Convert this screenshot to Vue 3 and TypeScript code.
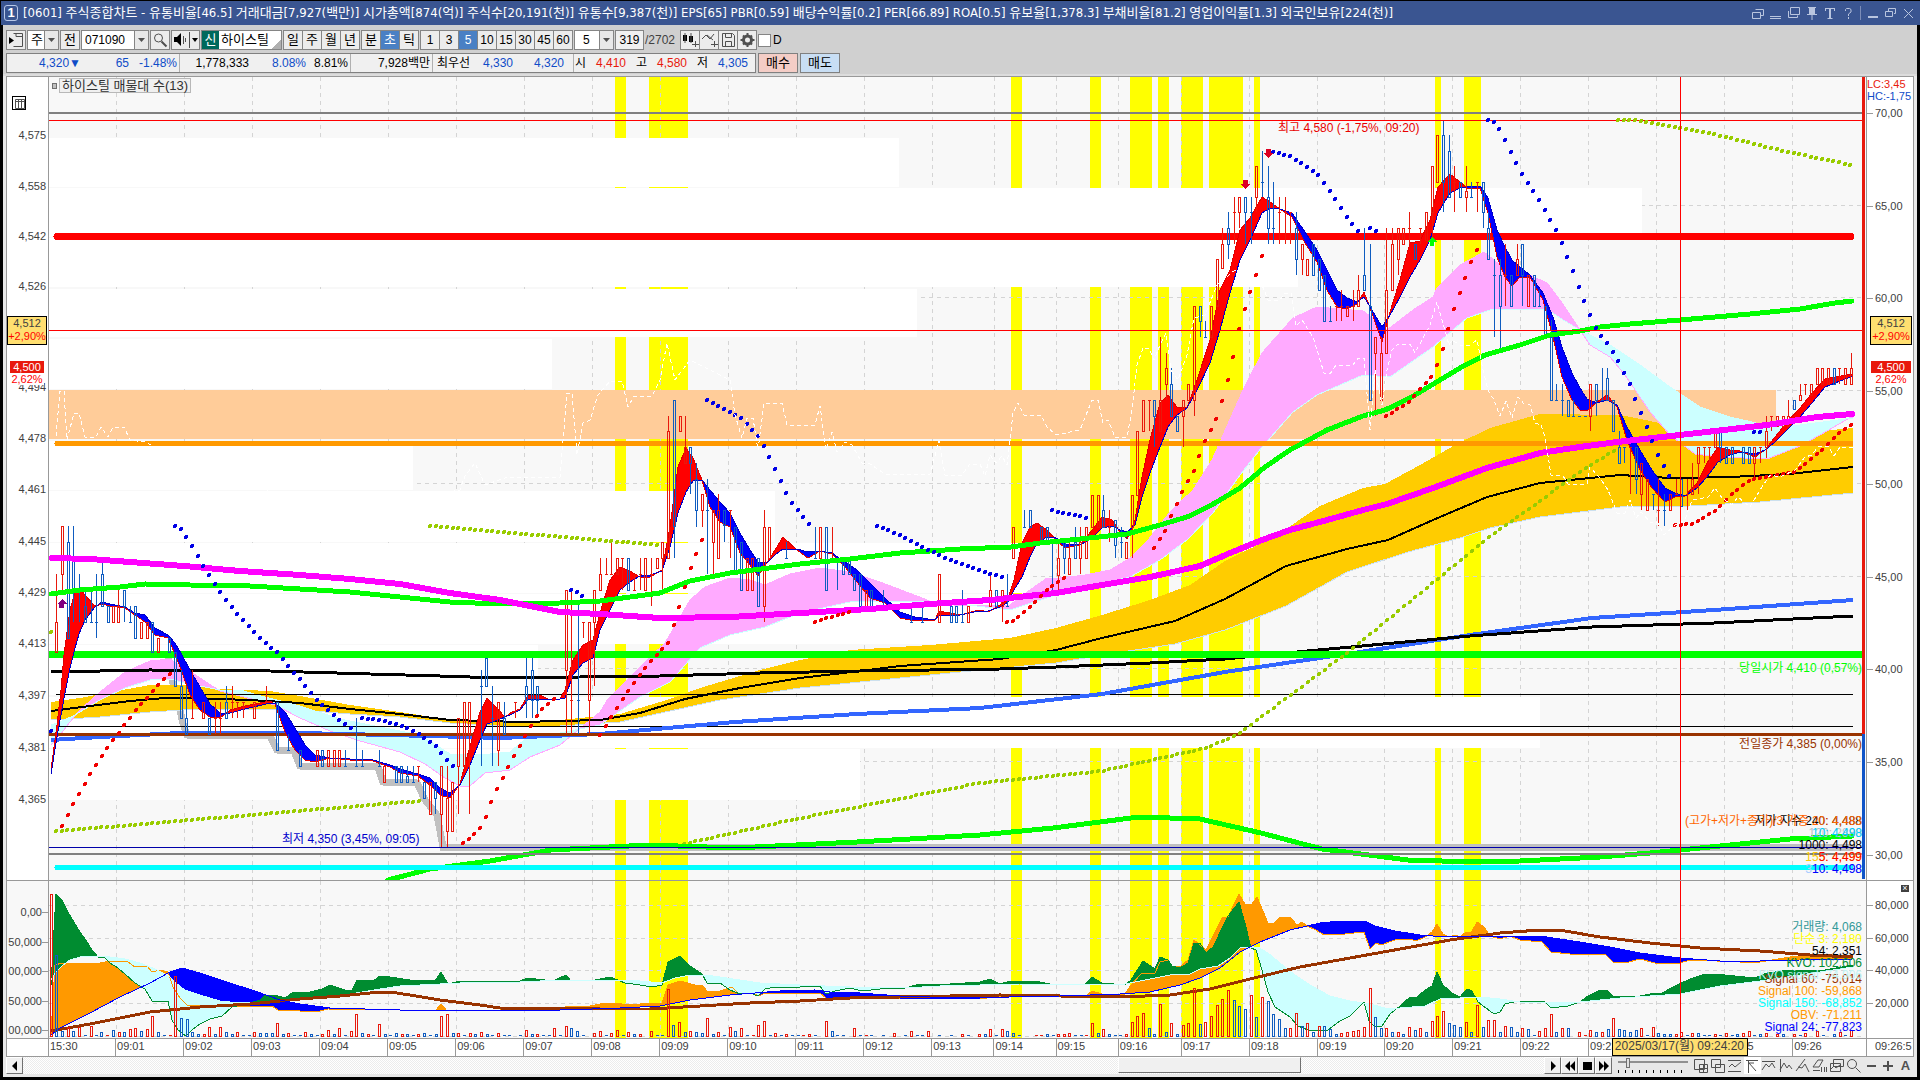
<script setup lang="ts">
type Pt = [number, number]
type Rect = { x: number; y: number; w: number; h: number }

const title =
  '[0601] 주식종합차트 - 유통비율[46.5] 거래대금[7,927(백만)] 시가총액[874(억)] 주식수[20,191(천)] 유통수[9,387(천)] EPS[65] PBR[0.59] 배당수익률[0.2] PER[66.89] ROA[0.5] 유보율[1,378.3] 부채비율[81.2] 영업이익률[1.3] 외국인보유[224(천)]'

const periods = ['일', '주', '월', '년']
const units = ['분', '초', '틱']
const counts = ['1', '3', '5', '10', '15', '30', '45', '60']

const times: [string, number][] = [
  ['15:30', 67], ['09:01', 68], ['09:02', 68], ['09:03', 68], ['09:04', 68], ['09:05', 68], ['09:06', 68],
  ['09:07', 68], ['09:08', 68], ['09:09', 68], ['09:10', 68], ['09:11', 68], ['09:12', 68], ['09:13', 62],
  ['09:14', 62], ['09:15', 62], ['09:16', 63], ['09:17', 68], ['09:18', 68], ['09:19', 67], ['09:20', 68],
  ['09:21', 68], ['09:22', 68], ['09:23', 68], ['09:24', 68], ['09:25', 68], ['09:26', 74],
]
const gridX: number[] = []
let edge = 49
for (const [, w] of times) {
  if (edge > 49) gridX.push(edge)
  edge += w
}

const pts = (s: string): Pt[] => s.trim().split(/\s+/).map(p => p.split(',').map(Number) as Pt)

/* ---------- bands ---------- */
function at(line: Pt[], x: number): number {
  if (x <= line[0][0]) return line[0][1]
  for (let i = 1; i < line.length; i++) {
    if (x <= line[i][0]) {
      const [x0, y0] = line[i - 1]
      const [x1, y1] = line[i]
      return y0 + ((y1 - y0) * (x - x0)) / (x1 - x0 || 1)
    }
  }
  return line[line.length - 1][1]
}
function band(a: Pt[], b: Pt[]): { up: string; down: string } {
  const xs = [...new Set([...a, ...b].map(p => p[0]))].sort((m, n) => m - n)
  let up = ''
  let down = ''
  const add = (x0: number, a0: number, b0: number, x1: number, a1: number, b1: number) => {
    const d = `M${x0} ${a0}L${x1} ${a1}L${x1} ${b1}L${x0} ${b0}Z`
    if (a0 + a1 < b0 + b1) up += d
    else down += d
  }
  for (let i = 1; i < xs.length; i++) {
    const x0 = xs[i - 1]
    const x1 = xs[i]
    const a0 = at(a, x0)
    const b0 = at(b, x0)
    const a1 = at(a, x1)
    const b1 = at(b, x1)
    const d0 = a0 - b0
    const d1 = a1 - b1
    if (d0 * d1 < 0) {
      const t = d0 / (d0 - d1)
      const xm = x0 + (x1 - x0) * t
      const ym = a0 + (a1 - a0) * t
      add(x0, a0, b0, xm, ym, ym)
      add(xm, ym, ym, x1, a1, b1)
    } else add(x0, a0, b0, x1, a1, b1)
  }
  return { up, down }
}
function marks(runs: string[]): Pt[] {
  const out: Pt[] = []
  for (const r of runs) {
    const line = pts(r)
    const end = line[line.length - 1][0]
    for (let x = line[0][0]; x <= end + 1; x += 5.67) out.push([Math.round(x), Math.round(at(line, x))])
  }
  return out
}

/* ---------- price pane ---------- */
const highlights: Rect[] = [
  [615, 11], [649, 39], [1011, 11], [1090, 11], [1130, 22], [1158, 11], [1181, 22], [1209, 34], [1254, 6], [1435, 6], [1464, 17],
].map(([x, w]) => ({ x, y: 77, w, h: 961 }))

const profile: [number, number, number][] = [
  [138, 49, 899], [188, 49, 1642], [238, 49, 1298], [289, 48, 917], [339, 50, 552],
  [441, 49, 413], [491, 51, 775], [543, 50, 1030], [594, 50, 1030], [645, 50, 538], [697, 51, 1540], [749, 51, 860],
]

const ribbonRows = `51,770,774 57,725,737 61,690,715 64,655,698 70,610,668 75,592,648 79,588,634 85,595,620 95,606,607 102,604,602 110,606,604 125,608,607 135,615,613 145,622,615 155,635,628 168,638,635 175,654,643 182,672,655 190,695,670 200,710,687 210,717,704 220,718,713 230,710,713 245,706,709 270,701,703 275,704,703 285,732,712 295,750,728 305,760,745 315,762,755 330,758,758 350,760,759 370,760,759 390,767,765 400,773,769 418,776,774 430,785,778 440,795,788 450,798,793 460,784,785 470,746,765 480,712,740 487,698,724 495,706,721 505,717,717 512,712,714 520,709,710 528,695,700 540,695,699 550,700,699 560,699,699 565,690,698 573,660,675 583,645,663 593,640,658 600,613,630 610,580,610 620,567,590 630,571,582 640,577,576 650,577,575 662,570,571 670,527,547 678,467,513 686,448,492 693,458,481 702,480,480 710,507,490 720,522,502 730,527,513 740,553,533 750,565,550 758,576,562 768,561,562 775,550,555 783,537,549 797,550,549 808,558,552 820,551,551 832,554,553 845,567,562 857,582,570 870,598,583 885,603,598 900,618,612 915,621,617 935,620,620 939,611,615 960,615,615 979,610,611 988,612,611 1000,605,607 1008,598,602 1014,580,590 1022,543,577 1030,527,557 1037,523,543 1047,530,537 1056,540,538 1065,548,544 1080,545,545 1092,530,538 1102,517,528 1112,520,526 1120,532,530 1127,539,532 1135,520,525 1142,477,497 1150,440,473 1160,403,447 1168,395,427 1177,407,415 1187,408,408 1197,380,390 1210,340,363 1220,290,330 1230,270,293 1240,230,260 1250,218,240 1262,197,213 1270,202,208 1280,209,209 1292,217,213 1305,243,232 1317,262,250 1327,290,270 1337,307,290 1347,309,298 1357,304,302 1364,292,297 1372,313,310 1382,342,327 1390,312,315 1400,280,297 1410,243,277 1420,241,260 1430,220,240 1438,187,213 1450,174,193 1460,182,188 1467,188,187 1480,188,186 1488,213,198 1497,257,230 1505,277,247 1512,286,260 1520,277,267 1530,277,275 1543,300,293 1553,337,317 1562,377,347 1572,400,373 1580,410,388 1587,411,399 1597,402,403 1607,395,400 1617,407,405 1627,440,427 1640,470,450 1652,488,470 1665,502,488 1675,497,493 1685,496,496 1697,483,488 1707,463,477 1718,447,462 1730,450,455 1740,451,452 1755,457,454 1765,450,450 1775,437,442 1787,422,430 1800,408,417 1812,393,403 1825,379,387 1835,377,383 1853,374,376`
  .split(' ').map(r => r.split(',').map(Number))
const fast = ribbonRows.map(r => [r[0], r[1]] as Pt)
const slow = ribbonRows.map(r => [r[0], r[2]] as Pt)
const ribbon = band(fast, slow)
const line = (p: Pt[]) => p.map(q => q.join(',')).join(' ')

const spanA = pts('51,745 60,735 70,722 80,710 100,692 125,672 150,661 170,659 185,668 200,678 220,691 275,705 300,718 330,731 360,741 400,752 425,764 445,778 460,786 470,786 485,773 510,770 530,757 560,745 600,712 608,699 640,667 665,643 690,600 705,587 730,578 750,580 765,585 790,574 820,568 850,572 880,582 930,601 960,606 1010,605 1030,590 1047,578 1060,578 1085,575 1110,570 1130,558 1148,540 1170,512 1193,490 1212,460 1243,390 1262,353 1293,318 1317,307 1363,311 1373,318 1380,328 1387,330 1413,310 1433,297 1437,288 1460,265 1484,252 1500,265 1523,272 1547,283 1560,300 1580,330 1590,345 1610,357 1625,375 1650,412 1670,435 1695,454 1720,457 1767,459 1800,446 1820,435 1853,416')
const spanB = pts('51,725 60,722 75,715 100,700 125,688 150,680 170,679 190,684 220,690 240,690 265,697 300,706 340,719 380,727 420,735 450,754 480,755 510,752 530,735 560,733 600,725 640,697 670,682 700,648 730,635 765,627 800,613 850,602 930,601 960,604 1010,610 1056,595 1100,584 1130,577 1160,560 1187,540 1213,513 1240,475 1262,447 1293,412 1317,395 1363,375 1390,377 1433,347 1467,318 1490,310 1547,309 1560,318 1580,330 1610,345 1640,365 1670,387 1700,407 1730,417 1765,425 1800,425 1853,418')
const cloud = band(spanA, spanB)

const goldTop = pts('51,702 80,698 100,694 150,685 185,685 220,689 270,691 300,696 350,705 400,712 450,720 500,722 560,720 620,714 670,699 700,688 760,670 800,660 850,650 930,645 1010,638 1056,628 1102,615 1150,600 1190,585 1225,561 1274,537 1320,506 1363,488 1385,484 1420,465 1455,445 1490,428 1540,414 1620,415 1650,421 1690,430 1720,433 1780,434 1810,432 1853,428')
const goldLow = pts('51,720 100,717 150,712 200,709 300,710 350,714 400,717 450,723 500,726 560,726 620,722 720,700 800,688 860,682 950,673 1056,663 1102,655 1175,644 1225,630 1286,606 1347,572 1408,552 1460,538 1490,528 1540,517 1580,512 1620,507 1690,506 1760,502 1853,493')
const gold = band(goldTop, goldLow)

const lines = {
  magenta: '52,558 90,559 130,562 184,566 240,571 300,575 350,579 400,584 450,593 500,600 560,612 600,614 660,618 730,617 800,613 870,609 930,604 990,600 1056,593 1102,585 1150,577 1200,566 1230,553 1262,540 1290,530 1327,520 1363,510 1387,504 1433,488 1487,468 1540,453 1580,447 1617,442 1680,435 1767,425 1817,417 1852,414',
  green: '51,594 80,590 120,587 145,584 190,585 250,586 300,589 350,592 400,597 450,602 500,604 560,603 600,601 660,593 690,581 730,573 800,564 850,559 900,553 960,549 1011,547 1040,543 1080,539 1127,534 1160,525 1190,516 1215,503 1240,488 1265,467 1290,450 1327,430 1363,416 1385,410 1410,398 1435,383 1460,368 1485,355 1520,345 1550,335 1580,331 1600,327 1630,324 1680,320 1750,314 1800,309 1835,303 1852,301',
  lowGreen: '388,880 430,869 490,861 551,850 649,845 735,848 857,842 980,835 1053,828 1139,817 1200,819 1261,833 1322,849 1408,860 1475,862 1520,861 1600,857 1650,853 1700,848 1750,843 1790,839 1852,836',
  blue: '51,740 100,737 140,735 180,733 300,733 430,736 500,738 600,734 735,722 857,714 980,708 1102,694 1225,672 1347,654 1470,635 1592,618 1714,610 1853,600',
  black: '51,672 150,670 270,671 370,674 440,676 500,678 660,676 760,673 860,671 1000,669 1056,667 1150,663 1225,659 1286,653 1470,636 1592,627 1714,623 1853,616',
  mid: '51,711 90,706 130,701 165,698 190,698 250,700 300,703 350,709 400,714 450,720 520,722 600,720 640,713 685,699 740,688 800,678 860,671 900,666 1000,659 1056,650 1102,638 1175,621 1225,599 1286,566 1347,549 1388,540 1433,520 1487,497 1540,483 1580,479 1620,475 1670,478 1730,477 1790,474 1853,467',
  steps: '168,655 172,680 178,700 183,724 187,735 270,736 277,750 294,751 300,766 378,767 383,782 417,783 425,800 437,815 443,847 1853,847',
  white: '56,436 60,391 64,391 67,440 74,413 79,413 85,437 96,437 101,427 108,437 113,427 124,427 130,440 145,442 200,470 300,500 400,500 460,490 465,476 475,463 485,485 508,477 560,477 567,393 572,393 577,455 583,423 590,420 598,395 610,381 622,381 628,407 634,396 652,396 660,380 667,343 675,380 690,360 730,380 735,415 742,438 747,418 753,418 758,450 764,403 782,403 787,425 815,425 820,406 826,450 832,432 837,452 845,442 852,445 862,463 870,464 885,474 930,474 939,441 945,475 962,475 970,464 980,464 985,476 990,455 996,463 1002,456 1007,465 1010,440 1013,413 1018,403 1024,415 1041,415 1047,427 1056,435 1080,430 1092,400 1098,400 1103,423 1108,420 1115,437 1127,437 1132,410 1137,365 1143,348 1149,348 1154,360 1160,345 1166,333 1171,370 1178,380 1187,355 1194,318 1205,315 1217,285 1235,270 1262,285 1268,300 1280,300 1285,293 1291,293 1296,326 1302,320 1313,337 1324,373 1330,374 1336,365 1353,365 1358,358 1364,358 1370,430 1375,370 1382,405 1387,370 1392,350 1398,344 1410,344 1415,353 1430,325 1437,302 1449,345 1452,340 1460,345 1470,345 1477,340 1483,370 1488,390 1494,400 1500,416 1506,401 1512,418 1518,397 1524,404 1530,405 1535,423 1541,425 1545,437 1551,475 1563,476 1568,484 1587,484 1590,467 1600,478 1608,490 1617,513 1625,513 1630,500 1636,518 1641,512 1650,522 1658,523 1664,535 1675,525 1685,520 1692,500 1708,497 1715,488 1722,498 1732,505 1738,497 1750,507 1760,490 1770,475 1780,477 1795,470 1805,457 1812,455 1818,447 1828,446 1834,456 1840,447 1853,447',
}

const blueDots = marks([
  '51,731 52,731', '175,526 181,529 192,546 204,567 220,592 240,617 262,640 277,652 290,668 305,685 316,699 328,710 340,721 351,728',
  '362,718 385,721 405,727 420,735 435,745 452,766', '571,590 577,592 583,597',
  '707,400 720,407 741,418 752,430 758,436 770,458 780,480 790,500 809,524', '877,526 900,535 922,547 950,560 975,569 1002,577',
  '1052,510 1058,512 1080,516 1087,518', '1273,152 1290,156 1301,163 1318,174 1330,191 1347,217 1358,231', '1370,228 1375,231',
  '1488,120 1494,122 1500,130 1511,153 1522,174 1539,200 1556,230 1568,258 1580,290 1596,329 1607,343 1618,360 1630,385 1642,415 1658,455 1670,477', '1754,432 1760,432',
])
const redDots = marks([
  '62,826 68,814 79,794 90,775 101,757 113,740 124,726 135,711 152,692 169,674',
  '463,843 475,834 482,825 487,814 492,800 498,787 510,764 520,745 539,712 558,695',
  '600,735 622,700 634,683 645,668 662,649 668,643 673,627 680,605 690,570 696,555 702,540',
  '815,622 837,615 850,612', '1007,622 1013,621 1018,617 1036,601 1047,590 1064,578',
  '1154,548 1166,530 1171,516 1183,491 1194,470 1205,441 1217,418 1222,401 1228,379 1234,355 1239,329 1245,308 1251,290 1256,275 1262,255',
  '1386,416 1409,402 1420,389 1432,376 1437,365 1443,348 1449,327 1454,309 1460,292 1466,276 1471,262 1477,249',
  '1675,525 1692,524 1715,511 1732,494 1750,480 1766,477 1795,472 1822,450 1840,432 1853,424',
])
const oliveDots = marks([
  '51,632 52,632', '56,831 120,826 250,815 420,801', '430,526 500,532 600,540 657,545',
  '684,844 796,819 980,783 1102,771 1206,748 1237,735 1347,653 1488,538 1580,472 1613,451', '1618,120 1635,120 1700,131 1780,150 1851,165',
])

/* colour, x, high, body top, body bottom, low */
const candles = `r56,574,622,652,652 r62,526,526,574,590 b68,526,542,638,638 b73,526,558,590,622 b79,574,590,590,622 b85,590,606,622,622 b91,590,622,622,622 b96,574,622,622,638 b102,558,574,606,606 b108,606,606,622,622 r113,606,606,622,622 r118,590,606,622,622 b124,590,590,606,622 b130,606,622,622,622 b135,606,606,638,638 r141,622,622,638,638 r147,622,622,638,638 b152,622,622,652,652 r158,638,638,652,652 b169,638,638,652,652 b175,652,652,686,686 b181,670,686,718,718 b186,686,718,734,734 r192,670,718,718,718 r203,702,702,718,718 b209,718,718,734,734 r215,702,718,718,734 r220,702,718,718,734 b226,686,702,718,718 r232,686,702,702,718 r237,702,702,702,718 r243,702,702,702,718 r254,702,702,718,718 r266,686,702,702,702 b277,702,702,750,750 b288,734,750,750,750 b300,750,750,766,766 r317,750,750,766,766 b322,750,750,766,766 r328,750,750,766,766 r334,750,750,766,766 r339,750,750,766,766 b345,750,766,766,766 b356,718,766,766,766 b362,750,766,766,766 b379,750,766,766,766 r384,766,766,782,782 b396,766,766,782,782 b401,766,766,782,782 b407,766,776,782,782 b413,766,782,782,782 r418,766,766,766,782 b424,782,782,798,798 r430,782,782,814,814 b435,782,782,798,814 r441,766,766,814,847 r447,766,798,831,847 r452,782,782,831,831 r458,718,718,766,814 r464,702,702,766,766 r469,702,702,734,814 b481,670,686,686,766 b486,658,658,686,686 b492,686,718,718,766 r498,702,702,750,766 b504,702,718,734,734 r515,702,702,702,718 b526,658,686,700,718 b532,658,670,700,718 b537,686,686,700,718 r566,590,590,670,734 r571,590,700,700,734 b578,605,700,700,734 r583,622,622,622,638 r589,622,622,700,734 r594,590,590,622,686 r600,558,574,590,590 r606,558,574,574,574 r611,542,574,574,574 r617,558,558,574,574 r622,558,558,558,590 b628,558,558,590,590 r634,574,590,590,590 r640,558,574,574,590 r645,558,558,590,590 r651,558,574,574,606 r657,558,558,568,568 r662,542,542,558,590 r668,416,431,558,558 b674,400,400,526,558 r680,416,416,431,431 r685,416,447,463,463 b690,447,447,463,494 b696,463,479,510,527 r702,494,494,510,527 b707,479,510,510,574 r713,510,510,542,574 r718,494,510,558,558 b724,510,510,525,542 r730,510,510,510,558 b735,527,527,574,574 b741,542,542,590,590 r747,558,558,590,590 r752,558,558,590,590 b758,558,558,606,606 r764,510,527,606,622 r769,527,527,558,558 b786,542,558,558,558 b815,527,558,558,558 r820,527,527,558,558 b826,527,527,590,590 r832,527,558,558,558 b837,558,558,558,590 b843,558,558,574,574 b849,558,558,574,574 b854,574,574,590,590 b860,574,574,606,606 r866,590,590,606,606 b871,590,590,606,606 b883,590,606,606,606 b911,606,622,622,622 b922,606,622,622,622 r939,574,574,622,622 b951,606,606,622,622 b956,606,606,622,622 b962,590,622,622,622 r968,606,606,622,622 r990,574,590,606,606 b996,590,590,606,606 r1002,590,590,606,622 b1007,574,606,606,606 r1013,527,527,558,558 b1024,510,527,527,527 b1030,510,510,527,527 b1041,527,527,542,542 b1047,527,527,542,542 b1052,542,590,590,590 r1058,542,558,575,590 b1064,540,542,558,574 r1069,542,558,574,574 b1075,527,542,558,558 r1080,527,542,558,574 r1086,527,527,558,558 r1092,495,495,527,527 r1098,495,495,527,527 b1103,495,510,527,527 r1109,510,527,527,542 b1115,520,520,545,558 b1121,527,542,542,558 r1126,542,542,558,558 r1132,495,495,527,558 r1137,431,431,495,495 r1143,400,400,431,431 r1149,400,400,400,431 b1154,400,400,416,447 r1160,337,400,431,431 r1166,353,368,384,400 b1171,368,384,416,416 b1177,416,416,431,431 r1183,400,400,416,447 r1188,384,384,400,400 r1194,306,306,400,416 b1200,306,306,321,337 b1205,321,337,337,337 r1211,306,306,337,337 r1217,259,259,306,306 r1222,228,244,268,268 b1228,212,228,244,259 r1234,197,212,212,244 r1239,197,197,212,228 b1245,197,197,212,244 b1251,197,212,212,244 r1256,166,166,197,212 b1262,151,182,182,197 b1268,166,197,228,244 b1273,182,228,228,244 r1279,197,212,212,244 r1285,197,212,212,244 r1290,212,212,212,244 b1296,212,228,259,275 r1302,244,244,259,275 r1307,259,259,275,275 b1313,244,244,275,275 b1319,259,259,290,290 b1324,275,275,321,321 b1330,306,321,321,321 r1336,306,306,306,321 r1341,290,306,306,321 r1347,306,306,316,316 r1353,290,306,306,321 r1358,275,290,306,306 b1364,228,275,290,290 b1370,244,306,400,400 r1375,337,337,353,416 r1381,337,353,400,400 r1386,228,290,353,353 r1392,228,244,290,290 r1398,228,228,259,275 r1403,228,228,244,244 r1409,212,228,228,244 b1415,244,244,259,259 r1420,228,228,228,244 r1426,212,212,240,240 r1432,166,166,212,240 r1437,135,135,182,182 b1443,121,135,182,212 b1449,135,151,197,197 r1454,166,182,182,212 b1460,182,182,197,197 r1466,166,191,197,212 b1471,182,197,197,197 r1477,182,182,182,212 b1483,182,182,212,228 b1488,212,228,259,259 b1494,259,275,275,337 b1500,259,275,306,353 r1505,244,275,275,306 b1511,275,275,306,306 r1517,244,259,275,275 b1522,244,244,275,306 r1528,275,275,306,306 b1534,275,275,306,306 b1539,290,306,306,306 b1545,306,306,337,337 b1551,320,337,400,400 b1556,384,400,400,400 b1562,384,400,400,416 b1568,400,400,416,416 b1573,400,416,416,416 b1579,416,416,416,416 b1585,416,416,416,416 r1590,384,384,416,431 b1596,384,384,400,416 b1602,368,400,400,400 b1607,368,378,400,400 b1613,400,400,431,431 b1619,431,447,463,463 b1624,447,447,447,463 r1630,447,447,447,494 b1636,447,447,479,494 r1641,463,463,494,510 r1647,479,479,510,510 b1653,494,494,494,510 r1658,479,510,510,526 b1664,494,510,510,526 r1670,494,494,510,510 r1676,479,494,494,494 b1681,479,479,506,506 r1687,479,494,494,510 r1692,463,479,494,494 r1698,447,447,463,494 r1704,447,447,447,463 r1709,447,447,447,463 r1715,431,431,447,447 b1720,431,431,447,463 b1726,447,447,463,463 b1732,447,447,463,463 b1743,447,447,463,463 b1749,447,447,463,463 r1754,447,447,463,479 r1760,447,447,447,463 r1766,416,431,447,458 r1771,416,416,416,431 r1777,416,416,426,426 r1783,416,416,426,426 r1788,400,416,426,426 b1794,400,400,409,409 r1800,384,395,400,400 r1805,384,384,384,395 r1811,384,384,395,395 r1817,368,368,384,384 r1822,368,368,384,384 r1828,368,368,384,384 b1834,368,368,384,384 r1839,368,368,368,384 r1845,368,368,384,384 r1851,353,368,384,384`
  .split(' ').map(c => {
    const [x, hi, bt, bb, lo] = c.slice(1).split(',').map(Number)
    return { up: c[0] === 'r', x, hi, bt, bb, lo }
  })
const candlePath = (up: boolean) =>
  candles.filter(c => c.up === up).map(c => {
    const m = c.x + 0.5
    let d = ''
    if (c.hi < c.bt) d += `M${m} ${c.hi}V${c.bt}`
    if (c.lo > c.bb) d += `M${m} ${c.bb}V${c.lo}`
    d += c.bt === c.bb ? `M${c.x - 1} ${c.bt + 0.5}h3` : `M${c.x - 0.5} ${c.bt + 0.5}h2V${c.bb + 0.5}h-2Z`
    return d
  }).join('')

/* ---------- volume pane ---------- */
const volumes = `r51,894 b56,955 b62,1031 r68,1027 b73,1031 r79,1027 b85,1035 r91,1026 b96,1035 b101,1032 r107,1035 b113,1030 r119,1032 b124,1032 r130,1029 r135,1028 b141,1031 r147,1029 r152,1016 b158,1032 b164,1035 r170,1035 r175,976 b181,1018 b187,1019 b192,1032 b198,1034 r204,1034 r209,1027 b215,1034 r220,1027 b226,1032 b232,1034 r237,1032 b243,1035 b249,1035 r254,1032 b260,1033 b266,1033 b272,1033 r277,1023 b283,1034 r288,1033 b294,1035 b300,1035 r305,1032 b311,1034 b317,1035 r322,1034 r328,1030 b334,1034 r339,1028 b345,1035 r351,1031 r356,1014 b362,1033 r368,1034 b373,1035 r379,1024 b385,1034 b390,1035 b396,1033 r402,1034 b407,1034 b413,1035 r418,1034 b424,1033 b430,1035 b436,1034 r441,1016 r447,1014 b453,1033 r458,1033 b464,1035 r470,1033 b475,1034 r481,1032 b487,1034 b492,1035 r498,1033 b504,1035 b509,1035 b520,1035 r526,1030 b532,1034 r537,1034 b543,1035 b549,1035 r554,1028 b560,1035 r566,1026 b571,1028 b577,1031 b583,1035 r594,1033 r600,1031 b606,1035 r611,1033 r617,1030 b623,1035 r628,1032 b634,1034 r640,1034 r651,1031 b657,1035 b662,1035 r668,989 b673,1025 r679,1022 b685,1032 r690,1031 b696,1032 b702,1033 r707,1018 b713,1034 r718,1032 b724,1035 r730,1027 b735,1031 r741,1028 b747,1035 r753,1035 r758,1025 r764,1021 b770,1035 r775,1033 b781,1035 r786,1034 b792,1035 b798,1035 r803,1035 r809,1034 b815,1035 r826,1021 b832,1031 b837,1035 b843,1035 r854,1028 b860,1035 r866,1035 b871,1035 b883,1035 r894,1033 b905,1035 r911,1031 b917,1035 b922,1035 r928,1031 b939,1035 b951,1035 r962,1034 b968,1035 r979,1034 b985,1034 r990,1029 b996,1035 r1002,1029 b1007,1031 b1013,1033 b1019,1035 r1036,1035 r1041,1035 b1047,1034 b1053,1035 r1058,1034 r1064,1034 r1069,1033 b1075,1035 b1081,1035 r1086,1035 r1092,1023 b1098,1033 r1103,1029 b1109,1034 b1115,1035 b1120,1035 r1126,1034 r1132,1022 r1137,1016 r1143,1013 b1149,1028 b1154,1034 r1160,1004 b1166,1032 r1171,1023 b1177,1034 r1183,1025 r1188,1023 r1194,988 b1200,1024 r1205,1022 r1211,1016 r1217,1005 r1222,999 r1228,990 b1234,1000 b1239,1006 b1245,1009 r1251,995 b1256,1017 r1262,997 b1268,1001 b1273,1014 b1279,1019 b1285,1028 r1290,1028 r1296,1013 b1302,1026 r1307,1023 b1313,1032 r1319,1026 b1324,1026 b1330,1029 b1336,1034 r1341,1033 r1347,1032 r1353,1031 r1358,1030 r1364,1027 r1370,988 b1375,1017 b1381,1028 r1386,1028 b1392,1032 r1398,1032 b1403,1034 r1409,1027 b1415,1030 r1420,1028 b1426,1032 r1432,1021 r1437,1016 r1443,1011 b1449,1023 b1454,1025 b1460,1027 r1466,1022 b1471,1032 r1477,1005 b1483,1027 r1488,1020 r1494,1020 b1500,1032 r1505,1026 b1511,1027 b1517,1032 r1522,1028 b1528,1029 b1534,1035 r1539,1031 r1545,1028 r1551,1014 b1556,1032 r1562,1028 b1568,1028 r1579,1032 r1585,1035 r1590,1030 b1596,1032 r1602,1032 b1608,1029 r1613,1018 b1619,1029 b1624,1030 b1630,1032 b1636,1030 r1641,1028 b1647,1035 r1653,1027 b1658,1033 b1664,1034 b1670,1034 r1676,1034 r1681,1032 b1687,1035 r1692,1033 b1698,1033 b1704,1035 b1709,1035 r1715,1034 b1720,1035 r1726,1033 b1732,1035 b1737,1034 r1743,1033 r1749,1031 b1754,1035 b1760,1034 r1766,1033 r1777,1034 b1783,1034 r1794,1034 b1800,1035 r1805,1033 r1817,1031 b1823,1035 b1834,1034 r1840,1032 b1845,1035 r1851,1030`
  .split(' ').map(v => {
    const [x, y] = v.slice(1).split(',').map(Number)
    return { up: v[0] === 'r', x, y }
  })
const volumePath = (up: boolean) =>
  volumes.filter(v => v.up === up).map(v =>
    v.y > 1034 ? `M${v.x - 1} 1035.5h3` : `M${v.x - 0.5} ${v.y + 0.5}h2V1036.5h-2Z`).join('')

const kvoLine = pts('51,985 56,894 62,900 68,912 74,922 80,932 86,940 92,950 98,957 105,958 110,963 118,968 125,974 135,983 145,989 152,1001 168,1001 172,1020 178,1030 186,1036 192,1030 200,1024 210,1019 222,1016 232,1007 250,1003 260,1000 265,995 275,995 285,998 292,993 310,992 322,989 330,985 345,990 352,990 357,980 373,981 380,976 390,977 410,980 435,981 441,972 448,984 460,981 490,982 520,981 527,978 545,980 555,980 566,975 571,981 595,980 610,977 620,981 625,983 640,985 652,987 662,985 668,962 680,956 690,966 702,974 707,983 720,983 730,990 740,994 750,993 758,996 765,989 775,987 800,987 820,986 826,994 835,991 850,988 862,991 880,989 905,988 920,984 950,984 980,982 990,979 1000,984 1010,981 1035,981 1050,984 1085,984 1092,977 1102,983 1125,985 1131,980 1143,961 1155,969 1160,957 1168,960 1172,966 1180,968 1188,963 1194,943 1200,943 1206,953 1213,947 1228,916 1239,902 1245,923 1251,948 1256,950 1262,970 1268,992 1275,1007 1290,1017 1298,1026 1308,1030 1328,1030 1340,1021 1350,1016 1364,1002 1369,1021 1375,1027 1382,1026 1390,1014 1400,1006 1410,997 1416,998 1425,990 1432,986 1437,972 1443,985 1452,993 1460,997 1467,989 1472,991 1478,1002 1486,1008 1494,1014 1500,1012 1505,1004 1518,1001 1530,1001 1545,1002 1551,1008 1568,1006 1580,1002 1588,996 1600,990 1607,990 1613,996 1640,996 1650,994 1662,993 1675,986 1690,979 1705,974 1725,975 1755,978 1767,973 1790,970 1825,970 1853,965')
const kvoSignal = pts('51,980 56,972 62,966 70,960 80,957 98,956 110,957 125,959 140,963 155,969 170,977 177,984 185,990 200,995 220,1001 240,1003 275,1002 320,997 350,994 380,989 400,986 440,984 480,982 520,982 560,980 620,980 640,981 662,983 675,978 690,975 705,975 720,977 740,980 760,983 800,985 850,987 905,988 940,986 980,985 1020,984 1125,984 1150,979 1175,974 1190,974 1200,969 1218,966 1230,958 1240,948 1258,947 1268,953 1280,963 1295,975 1310,985 1330,996 1350,1001 1370,1004 1385,1008 1400,1008 1425,1006 1440,999 1480,997 1500,999 1520,1002 1580,1002 1620,998 1680,994 1720,986 1760,981 1800,975 1853,967')
const obvLine = pts('51,1034 55,965 62,963 100,963 110,961 128,962 135,967 147,966 152,972 160,970 168,972 173,987 180,998 187,1005 200,1005 230,1006 272,1006 278,1010 300,1011 320,1011 328,1009 400,1010 436,1010 441,1004 447,1011 500,1010 560,1009 568,1006 590,1006 600,1004 612,1003 622,1004 640,1004 662,1003 668,985 680,981 695,985 702,985 707,991 720,991 732,987 738,993 755,994 759,996 765,993 800,993 820,993 826,998 850,998 900,999 980,999 1000,996 1086,996 1092,991 1102,994 1125,994 1131,985 1141,974 1155,973 1160,962 1168,960 1172,966 1180,967 1188,960 1194,940 1206,950 1222,918 1228,917 1239,894 1245,904 1252,904 1257,897 1268,923 1274,923 1280,917 1290,917 1297,925 1302,922 1307,926 1316,930 1324,935 1345,934 1364,932 1370,949 1376,943 1381,945 1395,940 1410,939 1416,941 1425,937 1432,932 1437,924 1443,934 1449,937 1455,935 1460,937 1466,932 1471,933 1477,922 1484,927 1490,936 1500,939 1510,936 1520,940 1542,942 1551,952 1570,954 1605,954 1613,962 1625,963 1640,959 1655,963 1680,963 1690,960 1717,961 1740,962 1760,962 1790,957 1825,955 1853,957')
const obvSignal = pts('51,1035 60,1028 90,1013 120,997 150,983 170,972 182,968 200,973 230,983 255,991 280,1000 300,1004 330,1008 400,1010 560,1010 592,1009 620,1008 660,1006 690,1000 730,995 780,991 815,990 830,992 860,993 900,996 960,998 1060,996 1120,994 1150,992 1180,985 1200,978 1220,968 1240,952 1260,942 1290,930 1307,926 1320,923 1340,921 1365,921 1375,926 1395,931 1420,935 1445,937 1480,936 1540,936 1580,942 1610,947 1640,953 1680,958 1720,961 1760,961 1800,960 1853,959')
const kvo = band(kvoLine, kvoSignal)
const obv = band(obvLine, obvSignal)
const brown = '51,1031 90,1024 115,1019 150,1012 200,1007 250,1004 300,999 340,996 370,993 390,992 410,995 440,1000 480,1005 500,1008 600,1009 650,1009 700,1006 750,1003 800,1001 850,998 900,997 1000,995 1060,996 1120,997 1170,995 1210,989 1250,979 1300,967 1350,958 1400,949 1450,940 1500,933 1540,930 1565,931 1600,937 1650,943 1700,948 1760,951 1810,955 1853,957'

/* ---------- axes ---------- */
const mainTop = (y: number) => ({ top: `${((y - 77) / 803) * 100}%` })
const subTop = (y: number) => ({ top: `${((y - 881) / 157) * 100}%` })
const leftX = (x: number) => ({ left: `${((x - 49) / 1817) * 100}%` })
const leftPrices: [string, number][] = [
  ['4,575', 135], ['4,558', 186], ['4,542', 236], ['4,526', 286], ['4,494', 387], ['4,478', 438], ['4,461', 489],
  ['4,445', 541], ['4,429', 592], ['4,413', 643], ['4,397', 695], ['4,381', 747], ['4,365', 799],
]
const rightPrices = ['70,00', '65,00', '60,00', '55,00', '50,00', '45,00', '40,00', '35,00', '30,00'].map(
  (t, i): [string, number] => [t, 113 + Math.round(i * 92.7)],
)
const leftVolumes: [string, number][] = [['0,00', 912], ['50,000', 942], ['00,000', 971], ['50,000', 1001], ['00,000', 1030]]
const rightVolumes: [string, number][] = [['80,000', 905], ['60,000', 938], ['40,000', 970], ['20,000', 1003]]

const priceLegend: [string, string, number][] = [
  ['당일시가 4,410 (0,57%)', '#00ff00', 668], ['전일종가 4,385 (0,00%)', '#993300', 744],
  ['저가 지수 240: 4,488', '#000000', 821], ['(고가+저가+종가)/3 가중 20: 4,483', '#ff6600', 821],
  ['120: 2880', '#c0c0c0', 833], ['10: 4,498', '#00ccff', 833], ['1000: 4,498', '#000000', 845],
  ['155: 4,499', '#ffcc00', 857], ['5: 4,499', '#ff0000', 857], ['310: 4,498', '#aaccff', 869], ['10: 4,498', '#0000ff', 869],
]
const volumeLegend: [string, string, number][] = [
  ['거래량: 4,068', '#339999', 927], ['단순 3: 2,180', '#ffff00', 939], ['54: 2,351', '#000000', 951],
  ['KVO: 102,606', '#008c30', 963], ['Signal 60: -75,014', '#993300', 979], ['KVO signal: 74,906', '#bff4f4', 975],
  ['Signal 100: -59,868', '#ff9900', 991], ['Signal 150: -68,852', '#00ffff', 1003], ['OBV: -71,211', '#ff9900', 1015],
  ['Signal 24: -77,823', '#0000ff', 1027],
]

const titleIcons = [
  'M4.5 3.5h8v6h-3M1.5 6.5h8v6h-8z', 'M1 10.5h11M1 12.5h11', 'M3.5 1.5h9v7h-9zM1.5 5v6.5h9v-2',
  'M3 1.5h8M4.5 2v6M5.5 2v6M6.5 2v6M7.500 2v6M8.5 2v6M9.5 2v6M2 8.5h10M7 9v5', 'M2 2.5h10M2.5 2v3M11.5 2v3M6.5 2v11M7.500 2v11M4.5 12.5h5', 'M4.5 5V3.5L5.5 2.5h3L10 3.5V6L7.5 8v2M7.5 11v2',
]
const windowIcons = ['M2 10.5h10M2 11.5h10', 'M4.5 5V2.5h7v5H10M1.5 5.5h7v5h-7z', 'M2 3l9 9M11 3l-9 9']
const toolIcons = [
  'M1.5 1.5h10v10h-10zM6.5 6.5h8v8h-8zM10.5 6.5v8M6.5 10.5h8', 'M1.5 1.5h9v8h-9zM5.5 6.5h9v8h-9z', 'M1 2.5h13M1 13.5h13M2 9l3-3 3 3 6-5',
  'M2 2.5h12M4.5 3v12M5 5l7 8M5 5l5 0', 'M1 3.5h13M1 12l4-6 3 3 3-4 3 5', 'M2.5 1v13M2 12l4-7 3 5 2-3 3 4', 'M1 13L10 1M3 9l4 1 3-4 4 8',
  'M1 9l5-7h5l-4 7zM9.5 9v5M12.5 9v5M14.5 9v5M1 12.5h7', 'M4.5 1.5h10v7h-10zM1.5 5.5h10v8h-10zM2 11l3-3 2 2 4-3', 'M6 1.5a4.5 4.5 0 1 1 0 9A4.5 4.5 0 0 1 6 1.5M9.5 9.5l5 5',
]
const playIcons = ['M6 3v10l5-5z', 'M8 3v10L3 8zM13 3v10L8 8z', 'M4 4h9v8H4z', 'M3 3v10l5-5zM8 3v10l5-5z']
</script>

<template>
  <div class="window">
    <header class="title-bar">
      <span class="window-no">1</span>
      <h1>{{ title }}</h1>
      <button v-for="(d, i) in titleIcons" :key="'t' + i" class="win-btn" type="button" aria-label="창 도구"><svg width="14" height="15"><path :d="d" /></svg></button>
      <span class="win-sep"></span>
      <button v-for="(d, i) in windowIcons" :key="'w' + i" class="win-btn" type="button" aria-label="창 조절"><svg width="14" height="15"><path :d="d" /></svg></button>
    </header>

    <div class="shell">
      <div class="toolbar">
        <button class="tool" type="button" aria-label="목록"><svg width="16" height="16"><path d="M5.5 1.5h9v13h-9M8 1.5v3h6" /><path class="solid" d="M1 5v7l5-3.5z" /></svg></button>
        <select class="combo short" aria-label="종류"><option>주</option></select>
        <button class="tool" type="button">전</button>
        <select class="combo code" aria-label="종목코드"><option>071090</option></select>
        <button class="tool" type="button" aria-label="검색"><svg width="16" height="16"><circle cx="6.5" cy="6" r="4" /><path class="wide" d="M9.5 9.5l5 5" /></svg></button>
        <button class="tool speaker" type="button" aria-label="음성"><svg width="28" height="16"><path class="solid" d="M2 5h3l4-4v13l-4-4H2zM20 6h6l-3 4z" /><path d="M11.5 4v8M13.5 6v4M17.5 0v16" /></svg></button>
        <div class="stock"><b>신</b><span>하이스틸</span></div>
        <div class="group"><button v-for="p in periods" :key="p" type="button">{{ p }}</button></div>
        <div class="group"><button v-for="u in units" :key="u" type="button" :class="{ on: u === '초' }">{{ u }}</button></div>
        <div class="group counts"><button v-for="c in counts" :key="c" type="button" :class="{ on: c === '5' }">{{ c }}</button></div>
        <select class="combo num" aria-label="간격"><option>5</option></select>
        <input class="count" aria-label="표시 개수" value="319" />
        <span class="total">/2702</span>
        <div class="group icons">
          <button type="button" aria-label="봉 추가"><svg width="17" height="16"><path class="solid" d="M1 3h4v6H1zM7 4h4v6H7z" /><path d="M3 1v10M9 1v10M13.5 9v6M10 12.5h7" /></svg></button>
          <button type="button" aria-label="지표 추가"><svg width="17" height="16"><path d="M1 7l4-4 4 4 4-5M6 3l6 5M13.5 9v6M10 12.5h7" /></svg></button>
          <button type="button" aria-label="저장"><svg width="17" height="16"><path d="M2.5 1.5h10l2 2v11h-12zM5.5 1.5v4h6v-4M5.5 14.5v-5h6v5" /></svg></button>
          <button type="button" aria-label="설정"><svg width="17" height="16"><circle class="gear" cx="8.5" cy="8" r="4" /><path class="wide" d="M8.5 1v3M8.5 12v3M1.5 8h3M12.5 8h3M4 3.5l1.5 1.5M13 3.5l-1.5 1.5M4 12.5l1.5-1.5M13 12.5L11.5 11" /></svg></button>
        </div>
        <label class="check"><input type="checkbox" /><span>D</span></label>
      </div>

      <div class="quote-row">
        <div class="quote">
          <span class="q q1 dn">4,320▼</span><span class="q q2 dn">65</span><span class="q q3 dn line">-1.48%</span>
          <span class="q q4">1,778,333</span><span class="q q5 dn">8.08%</span><span class="q q6 line">8.81%</span>
          <span class="q q7 line">7,928백만</span><span class="q q8">최우선</span><span class="q q9 dn">4,330</span><span class="q q10 dn line">4,320</span>
          <span class="q k">시</span><span class="q v up">4,410</span><span class="q k2">고</span><span class="q v up">4,580</span><span class="q k2">저</span><span class="q v dn">4,305</span>
        </div>
        <button class="order buy" type="button">매수</button>
        <button class="order sell" type="button">매도</button>
      </div>

      <main class="frame">
        <div class="pane main">
          <div class="axis left">
            <span class="grid-icon"><svg width="14" height="14"><path d="M2.5 2.5h9v9h-9zM5.5 2v10M8.5 2v10M2 4.5h10" /></svg></span>
            <span v-for="[t, y] in leftPrices" :key="t" class="tick" :style="mainTop(y)">{{ t }}</span>
            <div class="cursor-tag" :style="mainTop(316)"><span>4,512</span><em>+2,90%</em></div>
            <div class="price-tag" :style="mainTop(361)"><b>4,500</b><em>2,62%</em></div>
          </div>
          <div class="plot">
            <svg class="canvas" viewBox="49 77 1817 803" preserveAspectRatio="none" shape-rendering="crispEdges">
              <rect v-for="h in highlights" :key="h.x" :x="h.x" :y="h.y" :width="h.w" :height="h.h" fill="#ffff00" />
              <path v-for="x in gridX" :key="x" class="grid" :d="`M${x + 0.5} 77V880`" />
              <path v-for="[t, y] in rightPrices" :key="t" class="grid" :d="`M49 ${y - 0.5}H1862`" />
              <rect v-for="[y, h, x] in profile" :key="y" x="49" :y="y" :width="x - 49" :height="h" fill="#fff" />
              <rect x="49" y="390" width="1727" height="49" fill="#ffcc99" />
              <polyline :points="lines.steps" fill="none" stroke="#c0c0c0" stroke-width="7" />
              <path :d="gold.up" fill="#ffcc00" />
              <polyline :points="line(goldLow)" fill="none" stroke="#cce0ee" />
              <path :d="cloud.up" fill="#ffaaff" /><path :d="cloud.down" fill="#ccffff" />
              <polyline :points="line(spanA)" fill="none" stroke="#ffaaff" /><polyline :points="line(spanB)" fill="none" stroke="#ccffff" />
              <path d="M56 694.5H1853M56 726.5H1853" stroke="#000" />
              <polyline :points="lines.blue" fill="none" stroke="#3366ff" stroke-width="4" />
              <polyline :points="lines.black" fill="none" stroke="#000" stroke-width="3" />
              <polyline :points="lines.mid" fill="none" stroke="#000" stroke-width="2" />
              <path d="M49 654.5H1862" stroke="#00ff00" stroke-width="7" />
              <path d="M49 734.5H1862" stroke="#993300" stroke-width="3" />
              <path d="M57 236.5H1851" stroke="#ff0000" stroke-width="7" stroke-linecap="round" />
              <path d="M57 443.5H1851" stroke="#ff9900" stroke-width="5" stroke-linecap="round" />
              <path d="M49 113H1862" stroke="#808080" stroke-width="2" />
              <path d="M49 120.5H1862" stroke="#ff0000" />
              <path :d="ribbon.up" fill="#ff0000" /><path :d="ribbon.down" fill="#0000ff" />
              <polyline :points="line(fast)" fill="none" stroke="#e00000" /><polyline :points="line(slow)" fill="none" stroke="#0000c8" />
              <path :d="candlePath(true)" class="candle rise" /><path :d="candlePath(false)" class="candle fall" />
              <polyline :points="lines.green" fill="none" stroke="#00ff00" stroke-width="5" stroke-linecap="round" />
              <polyline :points="lines.magenta" fill="none" stroke="#ff00ff" stroke-width="6" stroke-linecap="round" />
              <g fill="#0000e6"><circle v-for="([x, y], i) in blueDots" :key="i" :cx="x" :cy="y" r="2" /></g>
              <g fill="#f00000"><circle v-for="([x, y], i) in redDots" :key="i" :cx="x" :cy="y" r="2" /></g>
              <g fill="#99cc00"><circle v-for="([x, y], i) in oliveDots" :key="i" :cx="x" :cy="y" r="2" /></g>
              <polyline :points="lines.white" fill="none" stroke="#fff" stroke-dasharray="4 3" />
              <polyline :points="lines.lowGreen" fill="none" stroke="#00ff00" stroke-width="5" stroke-linecap="round" />
              <path d="M49 847.5H1862" stroke="#0000aa" /><path d="M49 854H1862" stroke="#808080" stroke-width="2" />
              <path d="M57 867.5H1851" stroke="#00ffff" stroke-width="5" stroke-linecap="round" />
              <path d="M1266 149h5v4h3l-6 5-5-5h3zM1243 180h5v4h3l-6 5-5-5h3z" fill="#dd0022" />
              <path d="M62 599l5 5h-3v4h-5v-4h-2z" fill="#800080" /><path d="M1432 237l5 5h-3v4h-4v-4h-3z" fill="#00ff00" />
              <path d="M49 330.5H1862M1680.5 77V880" stroke="#ff0000" />
              <rect x="1862" y="77" width="3" height="657" fill="#e8190c" /><rect x="1862" y="734" width="3" height="145" fill="#0f54c8" />
            </svg>
            <div class="series"><i></i><span>하이스틸 매물대 수(13)</span></div>
            <span class="note high" :style="{ ...leftX(1278), ...mainTop(128) }">최고 4,580 (-1,75%, 09:20)</span>
            <span class="note low" :style="{ ...leftX(282), ...mainTop(839) }">최저 4,350 (3,45%, 09:05)</span>
            <span v-for="([t, c, y], i) in priceLegend" :key="i" class="note legend" :style="{ color: c, ...mainTop(y) }">{{ t }}</span>
          </div>
          <div class="axis right">
            <div class="lchc"><span class="up">LC:3,45</span><span class="dn">HC:-1,75</span></div>
            <span v-for="[t, y] in rightPrices" :key="t" class="tick" :style="mainTop(y)">{{ t }}</span>
            <div class="cursor-tag" :style="mainTop(316)"><span>4,512</span><em>+2,90%</em></div>
            <div class="price-tag" :style="mainTop(361)"><b>4,500</b><em>2,62%</em></div>
          </div>
        </div>

        <div class="pane sub">
          <div class="axis left"><span v-for="([t, y], i) in leftVolumes" :key="i" class="tick" :style="subTop(y)">{{ t }}</span></div>
          <div class="plot">
            <svg class="canvas" viewBox="49 881 1817 157" preserveAspectRatio="none" shape-rendering="crispEdges">
              <rect v-for="h in highlights" :key="h.x" :x="h.x" y="881" :width="h.w" height="157" fill="#ffff00" />
              <path v-for="x in gridX" :key="x" class="grid" :d="`M${x + 0.5} 881V1038`" />
              <path v-for="y in [905, 938, 970, 1003, 1036]" :key="y" class="grid" :d="`M49 ${y + 0.5}H1862`" />
              <path :d="obv.up" fill="#ff9900" /><path :d="obv.down" fill="#0000ff" />
              <path :d="kvo.up" fill="#008c30" /><path :d="kvo.down" fill="#ccffff" />
              <polyline :points="line(obvLine)" fill="none" stroke="#ff9900" />
              <polyline :points="line(kvoLine)" fill="none" stroke="#008c30" />
              <polyline :points="line(kvoSignal)" fill="none" stroke="#ccffff" />
              <polyline :points="brown" fill="none" stroke="#993300" stroke-width="3" />
              <polyline :points="line(obvSignal)" fill="none" stroke="#0000ff" />
              <path :d="volumePath(true)" class="candle rise" /><path :d="volumePath(false)" class="candle fall" />
              <path d="M1680.5 881V1038" stroke="#ff0000" />
            </svg>
            <span v-for="([t, c, y], i) in volumeLegend" :key="i" class="note legend" :style="{ color: c, ...subTop(y) }">{{ t }}</span>
          </div>
          <div class="axis right">
            <button class="close" type="button" aria-label="닫기">×</button>
            <span v-for="[t, y] in rightVolumes" :key="t" class="tick" :style="subTop(y)">{{ t }}</span>
          </div>
        </div>

        <div class="time-axis">
          <div class="time-scale">
            <span v-for="[t, w] in times" :key="t" :style="{ flexGrow: w }">{{ t }}</span>
            <div class="time-tag" :style="leftX(1612)">2025/03/17(월) 09:24:20</div>
          </div>
          <span class="now">09:26:5</span>
        </div>
      </main>

      <footer class="bottom">
        <button class="raised" type="button" aria-label="왼쪽"><svg width="15" height="15"><path class="solid" d="M10 3v10L5 8z" /></svg></button>
        <div class="track"><div class="thumb"></div></div>
        <button v-for="(d, i) in playIcons" :key="i" class="raised" type="button" aria-label="재생"><svg width="15" height="15"><path class="solid" :d="d" /></svg></button>
        <input class="slider" type="range" min="0" max="100" value="12" aria-label="속도" />
        <button v-for="(d, i) in toolIcons" :key="'b' + i" class="mini" :class="{ on: i === 3 }" type="button" aria-label="도구"><svg width="16" height="16"><path :d="d" /></svg></button>
        <button class="mini bold" type="button" aria-label="축소"><svg width="16" height="16"><path d="M4 8h9" /></svg></button>
        <button class="mini bold" type="button" aria-label="확대"><svg width="16" height="16"><path d="M3 8h10M8 3v10" /></svg></button>
        <button class="mini letter" type="button">A</button>
      </footer>
    </div>
  </div>
</template>

<style>
body { background: #000; }
</style>

<style scoped>
* { box-sizing: border-box; }
.window {
  min-height: 100vh; padding: 1px 0 3px; display: flex; flex-direction: column; background: #000; color: #000;
  font: 13px/14px "Liberation Sans", "Noto Sans CJK KR", sans-serif;
}
button, input, select { font: inherit; color: inherit; margin: 0; padding: 0; border: 0; background: none; border-radius: 0; }
svg { display: block; flex: none; fill: none; stroke: #505050; }
.canvas { stroke: none; }
.solid { fill: currentColor; stroke: none; }
.wide { stroke-width: 2; }
.gear { stroke-width: 3; }
.up { color: #e8190c; }
.dn { color: #0f4cc8; }

.title-bar { height: 24px; margin-left: 1px; display: flex; align-items: center; background: #3a5591; color: #fff; padding-right: 2px; }
.window-no { width: 14px; height: 16px; margin: 0 5px 0 3px; border: 1px solid #b8c8e8; border-radius: 3px; text-align: center; font-weight: bold; }
h1 { flex: 1; margin: 0; font: 13px/16px "DejaVu Sans Condensed", "Liberation Sans", "Noto Sans CJK KR", sans-serif; white-space: nowrap; overflow: hidden; }
.win-btn { width: 18px; height: 20px; display: grid; place-items: center; }
.win-btn svg { stroke: #b9c5df; }
.win-sep { width: 1px; height: 14px; margin: 0 3px; background: #7c8db8; }

.shell { flex: 1; display: flex; flex-direction: column; margin: 0 3px; background: #e8e8e8; }
.toolbar, .quote-row { display: flex; background: #d0d0d0; padding-left: 3px; }
.toolbar { padding-top: 5px; height: 28px; gap: 1px; }
.quote-row { height: 23px; gap: 2px; border-bottom: 2px solid #dcdcdc; }
.tool, .group button, .combo, .count { height: 20px; border: 1px solid #858585; background: #ececec; display: grid; place-items: center; }
.tool { width: 20px; }
.tool.speaker { width: 29px; }
.combo {
  appearance: none; padding: 0 3px; width: 32px; background: #fff url("data:image/svg+xml,%3Csvg xmlns='http://www.w3.org/2000/svg' width='14' height='18'%3E%3Cpath fill='%23e8e8e8' d='M0 0h14v18H0z'/%3E%3Cpath stroke='%23858585' d='M.5 0v18'/%3E%3Cpath fill='%23505050' d='M4 7h7l-3.5 4z'/%3E%3C/svg%3E") right center no-repeat;
}
.combo.code { width: 68px; font-size: 12px; }
.combo.num { width: 40px; padding-left: 8px; font-size: 12px; }
.stock { width: 81px; height: 20px; display: flex; border: 1px solid #858585; background: linear-gradient(135deg, #fff 90%, #b0b0b0 90%); line-height: 18px; white-space: nowrap; }
.stock b { width: 17px; background: #00695c; color: #fff; font-weight: normal; text-align: center; margin-right: 2px; }
.group { display: flex; padding-left: 1px; }
.group button { width: 20px; margin-left: -1px; }
.group .on { background: #4a80c4; color: #fff; }
.counts { font-size: 12px; }
.count { width: 29px; background: #f0f0f0; text-align: center; font-size: 12px; }
.total { line-height: 20px; width: 34px; color: #404040; font-size: 12px; }
.check { display: flex; align-items: center; height: 20px; gap: 2px; font-size: 12px; }
.check input { appearance: none; width: 13px; height: 13px; border: 1px solid #858585; background: #fff; }

.quote { width: 750px; height: 20px; display: flex; border: 1px solid #808080; background: #f0f0f0; font-size: 12px; line-height: 18px; white-space: nowrap; }
.q { text-align: right; padding-right: 2px; flex: none; }
.line { border-right: 1px solid #b0b0b0; }
.q1 { width: 76px; } .q2 { width: 48px; } .q3 { width: 49px; } .q4 { width: 71px; } .q5 { width: 57px; } .q6 { width: 43px; }
.q7 { width: 82px; } .q8 { width: 39px; } .q9 { width: 43px; } .q10 { width: 59px; padding-right: 9px; } .k { width: 14px; } .v { width: 40px; } .k2 { width: 21px; }
.order { width: 40px; height: 20px; border: 1px solid #808080; }
.buy { background: #f4cdc6; } .sell { background: #c8def4; }

.frame { flex: 1; margin: 0 3px; display: flex; flex-direction: column; border: 1px solid #999; background: #fff; }
.pane { display: flex; flex-basis: 0; border-bottom: 1px solid #999; }
.pane.main { flex-grow: 803; } .pane.sub { flex-grow: 157; }
.axis { position: relative; overflow: hidden; background: #fff; color: #404040; font-size: 11px; }
.axis.left { width: 42px; border-right: 1px solid #999; }
.axis.right { width: 47px; border-left: 1px solid #999; }
.sub .axis.left { background: #f8f8f8; }
.tick { position: absolute; transform: translateY(-50%); }
.left .tick { right: 2px; } .right .tick { left: 8px; }
.sub .left .tick { right: 6px; }
.tick::after { content: ""; position: absolute; top: 7px; width: 6px; height: 1px; background: #999; }
.right .tick::after { left: -8px; } .sub .left .tick::after { right: -6px; }
.main .left .tick::after { display: none; }
.plot { position: relative; flex: 1; background: #f8f8f8; font-size: 12px; }
.canvas { position: absolute; inset: 0; width: 100%; height: 100%; }
.grid { stroke: #d4d4d4; stroke-dasharray: 4 4; }
.candle { stroke-width: 1; fill: none; }
.rise { stroke: #e8190c; } .fall { stroke: #0f5cc0; }
.note { position: absolute; transform: translateY(-50%); white-space: nowrap; }
.high { color: #e80000; } .low { color: #0000cc; } .legend { right: 4px; }
.series { position: absolute; left: 3px; top: 1px; display: flex; align-items: center; gap: 2px; color: #303030; font-size: 13px; }
.series i { width: 5px; height: 6px; border: 1px solid #707070; background: #c0c0c0; }
.series span { height: 15px; padding: 0 2px; border: 1px solid #b8b8b8; background: #f0f0f0; line-height: 13px; }
.grid-icon { position: absolute; left: 5px; top: 19px; border: 1px solid #000; }
.grid-icon svg { width: 12px; height: 12px; }
.cursor-tag { position: absolute; left: 0; width: 40px; border: 1px solid #000; background: #ffdf70; line-height: 13px; height: 29px; display: flex; flex-direction: column; align-items: center; z-index: 1; }
.right .cursor-tag { left: 3px; width: 42px; }
em { font-style: normal; color: #ff0000; }
.price-tag { position: absolute; left: 3px; width: 34px; text-align: center; line-height: 12px; z-index: 1; background: #fff; height: 24px; }
.price-tag b { display: block; font-weight: normal; color: #fff; background: #e8190c; }
.right .price-tag { left: 4px; width: 40px; }
.lchc { position: absolute; left: 0; top: 1px; line-height: 12px; white-space: nowrap; }
.lchc span { display: block; }
.close { position: absolute; right: 4px; top: 4px; width: 8px; height: 7px; background: #404040; color: #fff; font-size: 9px; line-height: 7px; }

.time-axis { height: 17px; display: flex; color: #404040; font-size: 11px; line-height: 15px; padding-left: 41px; }
.time-scale { position: relative; flex: 1; display: flex; }
.time-scale > span { flex: 1 1 0; width: 0; border-left: 1px solid #999; padding-left: 1px; white-space: nowrap; }
.time-tag { position: absolute; top: -1px; height: 18px; padding: 0 2px; border: 1px solid #000; background: #ffdf70; white-space: nowrap; width: 136px; font-size: 12px; }
.now { width: 47px; border-left: 1px solid #999; padding-left: 8px; white-space: nowrap; }

.bottom { height: 20px; padding: 0 3px 3px; display: flex; }
.raised { width: 17px; height: 17px; background: #f0f0f0; border: 1px solid #707070; border-top-color: #fff; border-left-color: #fff; }
.track { flex: 1; background: repeating-conic-gradient(#fff 0 25%, #ececec 0 50%) 0 0 / 2px 2px; }
.thumb { width: 12%; height: 16px; margin-left: 72%; background: #f0f0f0; border: 1px solid #707070; border-top-color: #fff; border-left-color: #fff; }
.slider { appearance: none; width: 70px; height: 16px; margin: 0 5px 0 6px; background: linear-gradient(#909090, #909090) 0 4px / 100% 2px no-repeat, repeating-linear-gradient(90deg, #000 0 1px, transparent 1px 7px) 0 100% / 100% 3px no-repeat; }
.slider::-webkit-slider-thumb { appearance: none; width: 4px; height: 10px; margin-top: -4px; background: #e0e0e0; border: 1px solid #707070; }
.mini { width: 17px; height: 17px; }
.mini.on { background: #fff; }
.mini.bold path { stroke-width: 2; }
.letter { font-weight: bold; color: #505050; }
</style>
